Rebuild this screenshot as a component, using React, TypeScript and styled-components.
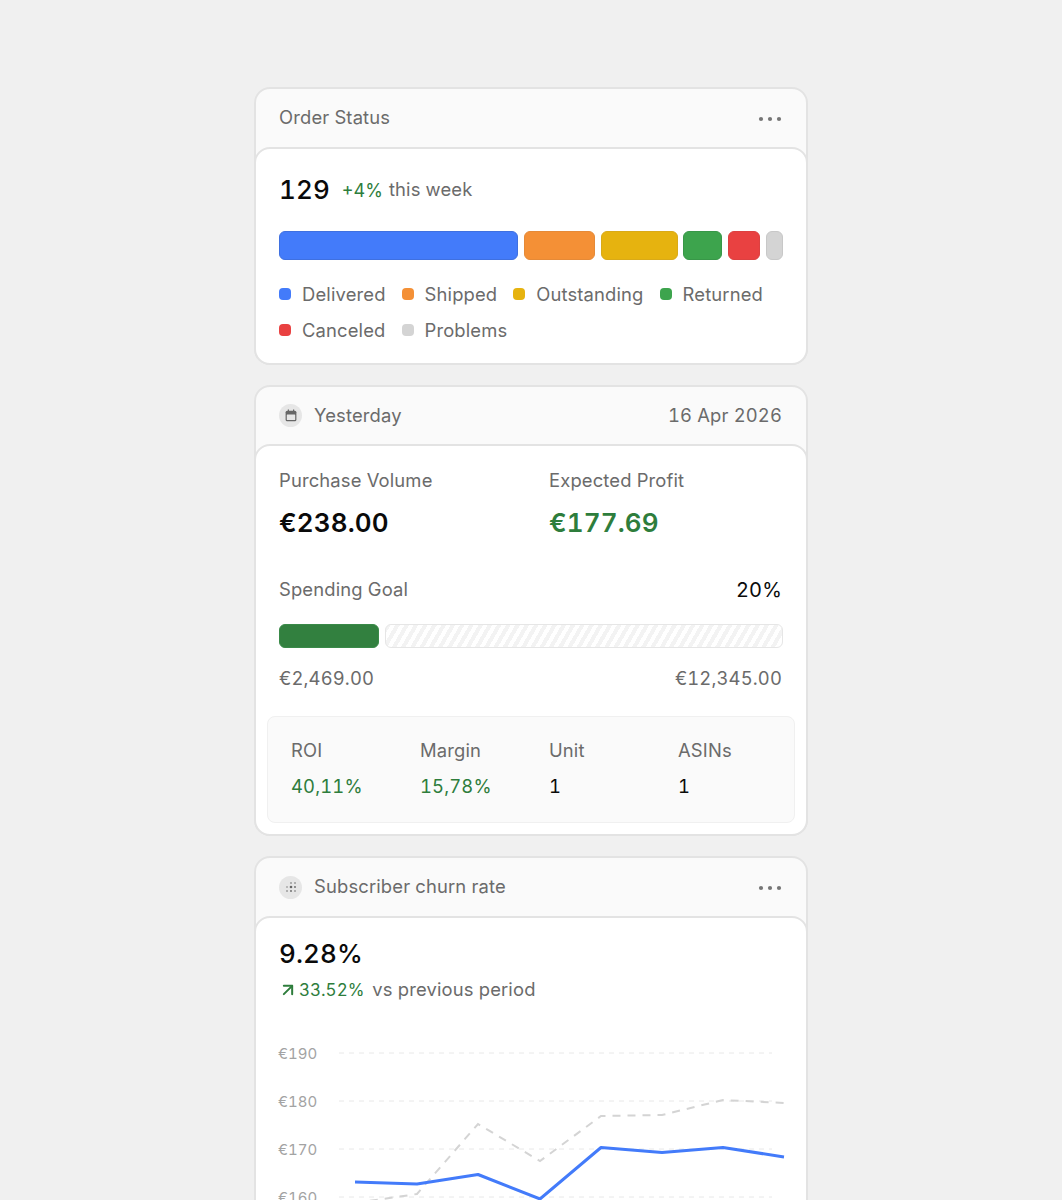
import { type PropsWithChildren, type ReactNode } from "react";
import styled, { createGlobalStyle } from "styled-components";
import { ArrowUpRight } from "lucide-react";

const GlobalStyle = createGlobalStyle`
	html, body {
		margin: 0;
		padding: 0;
		background: #f0f0f0;
	}
	body {
		font-family: Inter, "Liberation Sans", sans-serif;
		font-variant-numeric: tabular-nums;
		letter-spacing: 0.15px;
		-webkit-font-smoothing: antialiased;
	}
	* {
		box-sizing: border-box;
	}
`;

const orderSegments = [
	{ label: "Delivered", color: "#437bfa", border: "#3f70e0", size: 239 },
	{ label: "Shipped", color: "#f49036", border: "#e58a38", size: 71 },
	{ label: "Outstanding", color: "#e6b30f", border: "#d9aa18", size: 77 },
	{ label: "Returned", color: "#3da44d", border: "#389748", size: 39 },
	{ label: "Canceled", color: "#e94141", border: "#dc4141", size: 32 },
	{ label: "Problems", color: "#d4d4d4", border: "#c8c8c8", size: 17 },
];

const stats = [
	{ label: "ROI", value: "40,11%", positive: true },
	{ label: "Margin", value: "15,78%", positive: true },
	{ label: "Unit", value: "1", positive: false },
	{ label: "ASINs", value: "1", positive: false },
];

const xs = [76, 138, 199, 261, 322, 383, 444, 505];
const currentY = [136, 138, 128.5, 153, 101.5, 106.5, 101.5, 111];
const previousY = [157, 148, 78, 115, 70, 69, 54, 57];
const gridLines = [
	{ label: "€190", y: 7 },
	{ label: "€180", y: 55 },
	{ label: "€170", y: 103 },
	{ label: "€160", y: 151 },
];

const toPoints = (ys: number[]) => ys.map((y, i) => `${xs[i]},${y}`).join(" ");

function Card({
	header,
	action,
	compact,
	children,
}: PropsWithChildren<{ header: ReactNode; action?: ReactNode; compact?: boolean }>) {
	return (
		<Shell>
			<Header $compact={compact}>
				<HeaderTitle>{header}</HeaderTitle>
				{action}
			</Header>
			<Body>{children}</Body>
		</Shell>
	);
}

function MoreButton() {
	return (
		<More aria-label="More">
			<svg width="24" height="6" viewBox="0 0 24 6" fill="currentColor">
				<circle cx="3" cy="3" r="2.1" />
				<circle cx="12" cy="3" r="2.1" />
				<circle cx="21" cy="3" r="2.1" />
			</svg>
		</More>
	);
}

function CalendarIcon() {
	return (
		<svg width="12" height="13" viewBox="0 0 12 13" fill="none">
			<path d="M3.4 0.6v2.4M8.6 0.6v2.4" stroke="#666" strokeWidth="1.2" />
			<rect x="0.6" y="1.8" width="10.8" height="10.4" rx="1.5" fill="#666" />
			<rect x="1.8" y="5.6" width="8.4" height="5.4" rx="0.5" fill="#e6e6e6" />
		</svg>
	);
}

function DotsIcon() {
	const dots = [
		[8, 4, 0.8], [12, 4, 0.8],
		[4, 8, 0.7], [8, 8, 1.3], [12, 8, 0.9],
		[4, 12, 0.8], [8, 12, 0.9], [12, 12, 0.8],
	];
	return (
		<svg width="16" height="16" viewBox="0 0 16 16" fill="#666">
			{dots.map(([cx, cy, r]) => (
				<circle key={`${cx}-${cy}`} cx={cx} cy={cy} r={r} />
			))}
		</svg>
	);
}

function TrendChart() {
	return (
		<Chart viewBox="0 0 505 180" width="505" height="180">
			{gridLines.map((line) => (
				<g key={line.label}>
					<ChartLabel x={-1} y={line.y + 6}>
						{line.label}
					</ChartLabel>
					<line
						x1={60}
						x2={493}
						y1={line.y}
						y2={line.y}
						stroke="#e8e8e8"
						strokeWidth="1"
						strokeDasharray="5 5"
					/>
				</g>
			))}
			<polyline
				points={toPoints(previousY)}
				fill="none"
				stroke="#d4d4d4"
				strokeWidth="2"
				strokeDasharray="8 7"
			/>
			<polyline
				points={toPoints(currentY)}
				fill="none"
				stroke="#437bfa"
				strokeWidth="3"
				strokeLinejoin="round"
			/>
		</Chart>
	);
}

export default function App() {
	return (
		<>
			<GlobalStyle />
			<Page>
				<Card header={<Muted>Order Status</Muted>} action={<MoreButton />}>
					<OrderBody>
						<Summary>
							<BigNumber>129</BigNumber>
							<Delta>+4%</Delta>
							<Muted>this week</Muted>
						</Summary>
						<SegmentBar>
							{orderSegments.map((s) => (
								<Segment key={s.label} $color={s.color} $border={s.border} $size={s.size} />
							))}
						</SegmentBar>
						<Legend>
							{orderSegments.map((s) => (
								<LegendItem key={s.label}>
									<LegendDot $color={s.color} />
									{s.label}
								</LegendItem>
							))}
						</Legend>
					</OrderBody>
				</Card>

				<Card
					compact
					header={
						<>
							<IconBadge>
								<CalendarIcon />
							</IconBadge>
							<Muted>Yesterday</Muted>
						</>
					}
					action={<HeaderDate>16 Apr 2026</HeaderDate>}
				>
					<PurchaseBody>
						<Metrics>
							<div>
								<Muted>Purchase Volume</Muted>
								<Amount>€238.00</Amount>
							</div>
							<div>
								<Muted>Expected Profit</Muted>
								<Amount $positive>€177.69</Amount>
							</div>
						</Metrics>
						<GoalHead>
							<Muted>Spending Goal</Muted>
							<GoalPercent>20%</GoalPercent>
						</GoalHead>
						<GoalBar>
							<GoalFill />
							<GoalRest />
						</GoalBar>
						<GoalRange>
							<Muted>€2,469.00</Muted>
							<Muted>€12,345.00</Muted>
						</GoalRange>
						<StatsPanel>
							{stats.map((s) => (
								<div key={s.label}>
									<Muted>{s.label}</Muted>
									<StatValue $positive={s.positive}>{s.value}</StatValue>
								</div>
							))}
						</StatsPanel>
					</PurchaseBody>
				</Card>

				<Card
					header={
						<>
							<IconBadge>
								<DotsIcon />
							</IconBadge>
							<Muted>Subscriber churn rate</Muted>
						</>
					}
					action={<MoreButton />}
				>
					<ChurnBody>
						<BigNumber>9.28%</BigNumber>
						<Trend>
							<TrendUp>
								<ArrowUpRight size={20} strokeWidth={2.4} />
								33.52%
							</TrendUp>
							<Muted>vs previous period</Muted>
						</Trend>
						<TrendChart />
					</ChurnBody>
				</Card>
			</Page>
		</>
	);
}

const Page = styled.div`
	display: flex;
	flex-direction: column;
	align-items: center;
	gap: 20px;
	height: 1200px;
	overflow: hidden;
	padding-top: 87px;
`;

const Shell = styled.section`
	flex: none;
	width: 554px;
	border: 2px solid #e3e3e3;
	border-radius: 16px;
	background: #fafafa;
`;

const Header = styled.header<{ $compact?: boolean }>`
	display: flex;
	align-items: center;
	justify-content: space-between;
	height: ${(p) => (p.$compact ? "57px" : "58px")};
	padding: 0 23px;
`;

const HeaderTitle = styled.div`
	display: flex;
	align-items: center;
	gap: 12px;
`;

const Muted = styled.span`
	display: block;
	padding-bottom: 2px;
	font-size: 18.4px;
	line-height: 22px;
	color: #6b6b6b;
`;

const HeaderDate = styled(Muted)`
	margin-right: 1px;
`;

const More = styled.button`
	display: flex;
	border: 0;
	padding: 0;
	margin: 2px 1px 0 0;
	background: none;
	color: #757575;
`;

const IconBadge = styled.span`
	display: flex;
	align-items: center;
	justify-content: center;
	width: 23px;
	height: 23px;
	border-radius: 50%;
	background: #e6e6e6;
`;

const Body = styled.div`
	margin: 0 -2px -2px;
	border: 2px solid #e3e3e3;
	border-radius: 16px;
	background: #fff;
`;

const OrderBody = styled.div`
	padding: 25px 23px 15px;
`;

const Summary = styled.div`
	display: flex;
	align-items: center;
	height: 32px;
`;

const BigNumber = styled.div`
	font-size: 26px;
	line-height: 32px;
	font-weight: 500;
	letter-spacing: 0.1px;
	color: #0a0a0a;
`;

const Delta = styled.span`
	margin: 0 6px 0 12px;
	font-size: 18px;
	letter-spacing: 0;
	color: #2e7d3c;
`;

const SegmentBar = styled.div`
	display: flex;
	gap: 5.8px;
	margin-top: 25px;
	height: 29px;
`;

const Segment = styled.div<{ $color: string; $border: string; $size: number }>`
	flex: 1 1 ${(p) => p.$size}px;
	border: 1px solid ${(p) => p.$border};
	border-radius: 6px;
	background: ${(p) => p.$color};
`;

const Legend = styled.div`
	display: flex;
	flex-wrap: wrap;
	column-gap: 16px;
	margin-top: 16px;
`;

const LegendItem = styled.div`
	display: flex;
	align-items: center;
	gap: 11px;
	height: 36px;
	font-size: 18.4px;
	color: #6b6b6b;
`;

const LegendDot = styled.span<{ $color: string }>`
	width: 12px;
	height: 12px;
	border-radius: 4px;
	background: ${(p) => p.$color};
`;

const PurchaseBody = styled.div`
	padding: 23px 23px 11px;
`;

const Metrics = styled.div`
	display: grid;
	grid-template-columns: 270px 1fr;
`;

const Amount = styled.div<{ $positive?: boolean }>`
	margin-top: 12px;
	font-size: 26px;
	line-height: 36px;
	font-weight: 600;
	color: ${(p) => (p.$positive ? "#2e7d3c" : "#0a0a0a")};
`;

const GoalHead = styled.div`
	display: flex;
	align-items: center;
	justify-content: space-between;
	margin-top: 37px;
	padding-right: 1px;
`;

const GoalPercent = styled.span`
	font-size: 20px;
	line-height: 24px;
	color: #0a0a0a;
`;

const GoalBar = styled.div`
	display: flex;
	gap: 6px;
	margin-top: 22px;
	height: 24px;
`;

const GoalFill = styled.div`
	width: 100px;
	border: 1px solid #3a8a49;
	border-radius: 6px;
	background: #32803f;
`;

const GoalRest = styled.div`
	flex: 1;
	border: 1px solid #e6e6e6;
	border-radius: 6px;
	background: repeating-linear-gradient(
		120deg,
		#f3f3f3 0 4px,
		#ffffff 4px 8px
	);
`;

const GoalRange = styled.div`
	display: flex;
	justify-content: space-between;
	margin-top: 19px;
	padding-right: 1px;
`;

const StatsPanel = styled.div`
	display: grid;
	grid-template-columns: repeat(4, 129px);
	height: 107px;
	margin: 25px -12px 0;
	padding: 22px 23px 0;
	border: 1px solid #f0f0f0;
	border-radius: 8px;
	background: #fafafa;
`;

const StatValue = styled.div<{ $positive: boolean }>`
	margin-top: 11px;
	font-size: 18.4px;
	line-height: 24px;
	color: ${(p) => (p.$positive ? "#2e7d3c" : "#0a0a0a")};
`;

const ChurnBody = styled.div`
	padding: 20px 23px 24px;
`;

const Trend = styled.div`
	display: flex;
	align-items: center;
	gap: 8px;
	margin-top: 8px;
`;

const TrendUp = styled.span`
	display: flex;
	align-items: center;
	font-size: 17px;
	line-height: 24px;
	letter-spacing: 0;
	color: #2e7d3c;

	svg {
		margin: 0 1px 0 -1px;
	}
`;

const Chart = styled.svg`
	display: block;
	margin-top: 44px;
	overflow: visible;
`;

const ChartLabel = styled.text`
	font-size: 15px;
	letter-spacing: 0;
	fill: #a3a3a3;
`;
